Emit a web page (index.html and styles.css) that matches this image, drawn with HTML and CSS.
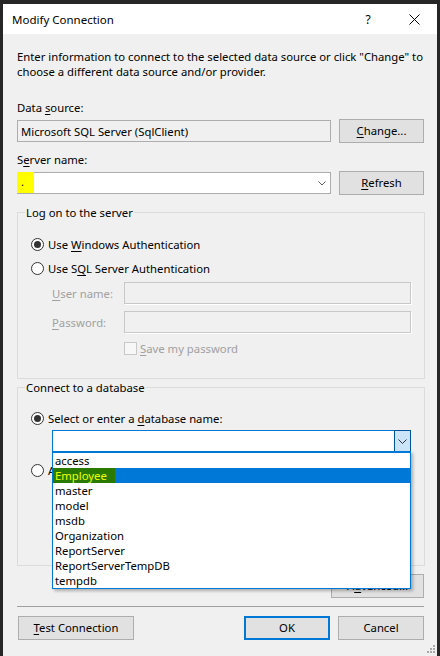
FILE: index.html
```
<!DOCTYPE html>
<html lang="en">
<head>
<meta charset="utf-8">
<title>Modify Connection</title>
<link rel="stylesheet" href="styles.css">
</head>
<body>
<div class="window">
  <header class="titlebar">
    <span class="title">Modify Connection</span>
    <span class="cap-btn help">?</span>
    <span class="cap-btn close"><svg width="11" height="11" viewBox="0 0 11 11"><path d="M0.5 0.5L10.5 10.5M10.5 0.5L0.5 10.5" stroke="#000" stroke-width="1" fill="none"/></svg></span>
  </header>
  <main class="content">
    <p class="intro">Enter information to connect to the selected data source or click "Change" to<br>choose a different data source and/or provider.</p>

    <div class="label">Data <u>s</u>ource:</div>
    <div class="field-row">
      <div class="textbox readonly">Microsoft SQL Server (SqlClient)</div>
      <button class="btn"><u>C</u>hange...</button>
    </div>

    <div class="label second">S<u>e</u>rver name:</div>
    <div class="field-row">
      <div class="combo server">
        <span class="marker">.</span>
        <span class="chev"><svg width="8" height="5" viewBox="0 0 8 5"><path d="M0.5 0.5L4 4L7.5 0.5" stroke="#606060" stroke-width="1" fill="none"/></svg></span>
      </div>
      <button class="btn"><u>R</u>efresh</button>
    </div>

    <fieldset class="group logon">
      <legend>Log on to the server</legend>
      <div class="radio-row first">
        <svg class="radio" width="13" height="13" viewBox="0 0 13 13"><circle cx="6.5" cy="6.5" r="6" fill="#fff" stroke="#333"/><circle cx="6.5" cy="6.5" r="3.5" fill="#333"/></svg>
        <span>Use <u>W</u>indows Authentication</span>
      </div>
      <div class="radio-row">
        <svg class="radio" width="13" height="13" viewBox="0 0 13 13"><circle cx="6.5" cy="6.5" r="6" fill="#fff" stroke="#333"/></svg>
        <span>Use S<u>Q</u>L Server Authentication</span>
      </div>
      <div class="cred-row first">
        <span class="cred-label"><u>U</u>ser name:</span>
        <div class="dis-input"></div>
      </div>
      <div class="cred-row">
        <span class="cred-label"><u>P</u>assword:</span>
        <div class="dis-input"></div>
      </div>
      <div class="check-row">
        <span class="checkbox"></span>
        <span class="dis-text"><u>S</u>ave my password</span>
      </div>
    </fieldset>

    <fieldset class="group database">
      <legend>Connect to a database</legend>
      <div class="radio-row first">
        <svg class="radio" width="13" height="13" viewBox="0 0 13 13"><circle cx="6.5" cy="6.5" r="6" fill="#fff" stroke="#333"/><circle cx="6.5" cy="6.5" r="3.5" fill="#333"/></svg>
        <span>Select or enter a <u>d</u>atabase name:</span>
      </div>
      <div class="db-combo">
        <span class="drop-btn"><svg width="9" height="5" viewBox="0 0 9 5"><path d="M0.5 0.5L4.5 4.5L8.5 0.5" stroke="#333" stroke-width="1" fill="none"/></svg></span>
        <ul class="db-list">
          <li>access</li>
          <li class="selected"><span class="hl">Employee</span></li>
          <li>master</li>
          <li>model</li>
          <li>msdb</li>
          <li>Organization</li>
          <li>ReportServer</li>
          <li>ReportServerTempDB</li>
          <li>tempdb</li>
        </ul>
      </div>
      <div class="radio-row attach">
        <svg class="radio" width="13" height="13" viewBox="0 0 13 13"><circle cx="6.5" cy="6.5" r="6" fill="#fff" stroke="#333"/></svg>
        <span>Attach a database file:</span>
      </div>
    </fieldset>

    <div class="adv-row"><button class="btn adv">A<u>d</u>vanced...</button></div>
    <div class="sep"></div>
    <div class="bottom-row">
      <button class="btn test"><u>T</u>est Connection</button>
      <button class="btn ok">OK</button>
      <button class="btn cancel">Cancel</button>
    </div>
  </main>
  <span class="grip"><svg width="8" height="8" viewBox="0 0 8 8" fill="#a8a8a8"><rect x="6" y="0" width="2" height="2"/><rect x="3" y="3" width="2" height="2"/><rect x="6" y="3" width="2" height="2"/><rect x="0" y="6" width="2" height="2"/><rect x="3" y="6" width="2" height="2"/><rect x="6" y="6" width="2" height="2"/></svg></span>
</div>
</body>
</html>
```

FILE: styles.css
```
* { box-sizing: border-box; }
html, body { margin: 0; padding: 0; }
body {
  width: 440px;
  height: 656px;
  overflow: hidden;
  background: #262626;
  font-family: "Noto Sans", "Open Sans", sans-serif;
  font-size: 11.3px;
  line-height: 15px;
  color: #000;
}
u { text-decoration: underline; text-underline-offset: 2px; }

.window {
  position: relative;
  margin: 4px 0 0 3px;
  width: 434px;
  height: 652px;
  background: #f0f0f0;
  display: flex;
  flex-direction: column;
}

.titlebar {
  flex: none;
  height: 30px;
  background: #fff;
  display: flex;
  align-items: center;
  padding-left: 9px;
}
.title { flex: 1; font-size: 11.5px; }
.cap-btn {
  width: 46px;
  height: 30px;
  display: flex;
  align-items: center;
  justify-content: center;
}
.help { font-size: 12px; }

.content {
  flex: 1;
  display: flex;
  flex-direction: column;
  padding: 0 13px 0 14px;
}
.intro { margin: 15px 0 0; white-space: nowrap; }

.label { margin-top: 21px; }
.label.second { margin-top: 9px; }

.field-row {
  margin-top: 4px;
  height: 24px;
  display: flex;
  align-items: center;
  justify-content: space-between;
}
.textbox {
  width: 314px;
  height: 22px;
  border: 1px solid #adadad;
  padding-left: 3px;
  display: flex;
  align-items: center;
}
.readonly { background: #f0f0f0; }

.combo {
  width: 314px;
  height: 22px;
  border: 1px solid #adadad;
  background: #fff;
  display: flex;
  align-items: flex-start;
}
.marker {
  width: 17px;
  height: 21px;
  margin: -1px 0 0 -1px;
  background: #ffff00;
  padding-left: 4px;
  line-height: 20px;
}
.chev {
  margin-left: auto;
  width: 17px;
  height: 20px;
  display: flex;
  align-items: center;
  justify-content: center;
}

.btn {
  font: inherit;
  color: #000;
  background: #e1e1e1;
  border: 1px solid #adadad;
  padding: 0;
  width: 85px;
  height: 24px;
  line-height: 20px;
}

.group {
  margin: 10px -1px 0 0;
  padding: 0 0 22px;
  border: 1px solid #dcdcdc;
  min-width: 0;
}
.group legend {
  margin-left: 7px;
  padding: 0 1px;
  line-height: 15px;
}
.group.database { margin-top: 1px; padding-bottom: 87px; }

.radio-row {
  display: flex;
  align-items: center;
  gap: 4px;
  height: 16px;
  padding-left: 13px;
  margin-top: 8px;
}
.radio-row.first { margin-top: 16px; }
.database .radio-row.first { margin-top: 15px; }
.radio-row.attach { margin-top: 10px; }
.radio { flex: none; }

.cred-row {
  display: flex;
  align-items: center;
  height: 22px;
  padding-left: 34px;
  margin-top: 7px;
}
.cred-row.first { margin-top: 6px; }
.cred-label { width: 72px; color: #a0a0a0; }
.dis-input {
  width: 287px;
  height: 22px;
  border: 1px solid #c8c8c8;
  background: #f0f0f0;
  box-shadow: 1px 1px 0 #fff;
}
.check-row {
  display: flex;
  align-items: center;
  gap: 3px;
  height: 16px;
  margin-top: 7px;
  padding-left: 106px;
}
.checkbox {
  width: 13px;
  height: 13px;
  border: 1px solid #c8c8c8;
  background: #f7f7f7;
}
.dis-text { color: #a0a0a0; }

.db-combo {
  position: relative;
  margin: 4px 0 0 34px;
  width: 359px;
  height: 22px;
  border: 1px solid #0078d7;
  background: #fff;
  display: flex;
  justify-content: flex-end;
}
.drop-btn {
  width: 17px;
  margin: -1px -1px -1px 0;
  background: #cce4f7;
  border: 1px solid #005499;
  display: flex;
  align-items: center;
  justify-content: center;
}
.db-list {
  position: absolute;
  z-index: 10;
  top: 100%;
  left: -1px;
  width: 359px;
  margin: 0;
  padding: 0;
  list-style: none;
  background: #fff;
  border: 1px solid #0078d7;
  border-top-width: 2px;
  box-shadow: 2px 2px 3px rgba(0, 0, 0, 0.28);
}
.db-list li {
  height: 15px;
  line-height: 15px;
  padding-left: 2px;
  white-space: nowrap;
}
.db-list li.selected { background: #0078d7; padding-left: 0; }
.hl {
  display: inline-block;
  height: 15px;
  padding: 0 8px 0 2px;
  background: #2a7a00;
  color: #eeff00;
}

.adv-row {
  margin-top: 8px;
  display: flex;
  justify-content: flex-end;
}
.btn.adv { width: 93px; }

.sep {
  margin-top: 8px;
  height: 1px;
  background: #a0a0a0;
}

.bottom-row {
  margin-top: 9px;
  display: flex;
  gap: 8px;
}
.btn.test { width: 116px; margin-left: 1px; margin-right: auto; }
.btn.ok { width: 86px; border: 2px solid #0078d7; }
.btn.cancel { width: 86px; }

.grip {
  position: absolute;
  right: 2px;
  bottom: 3px;
  display: flex;
}
```
